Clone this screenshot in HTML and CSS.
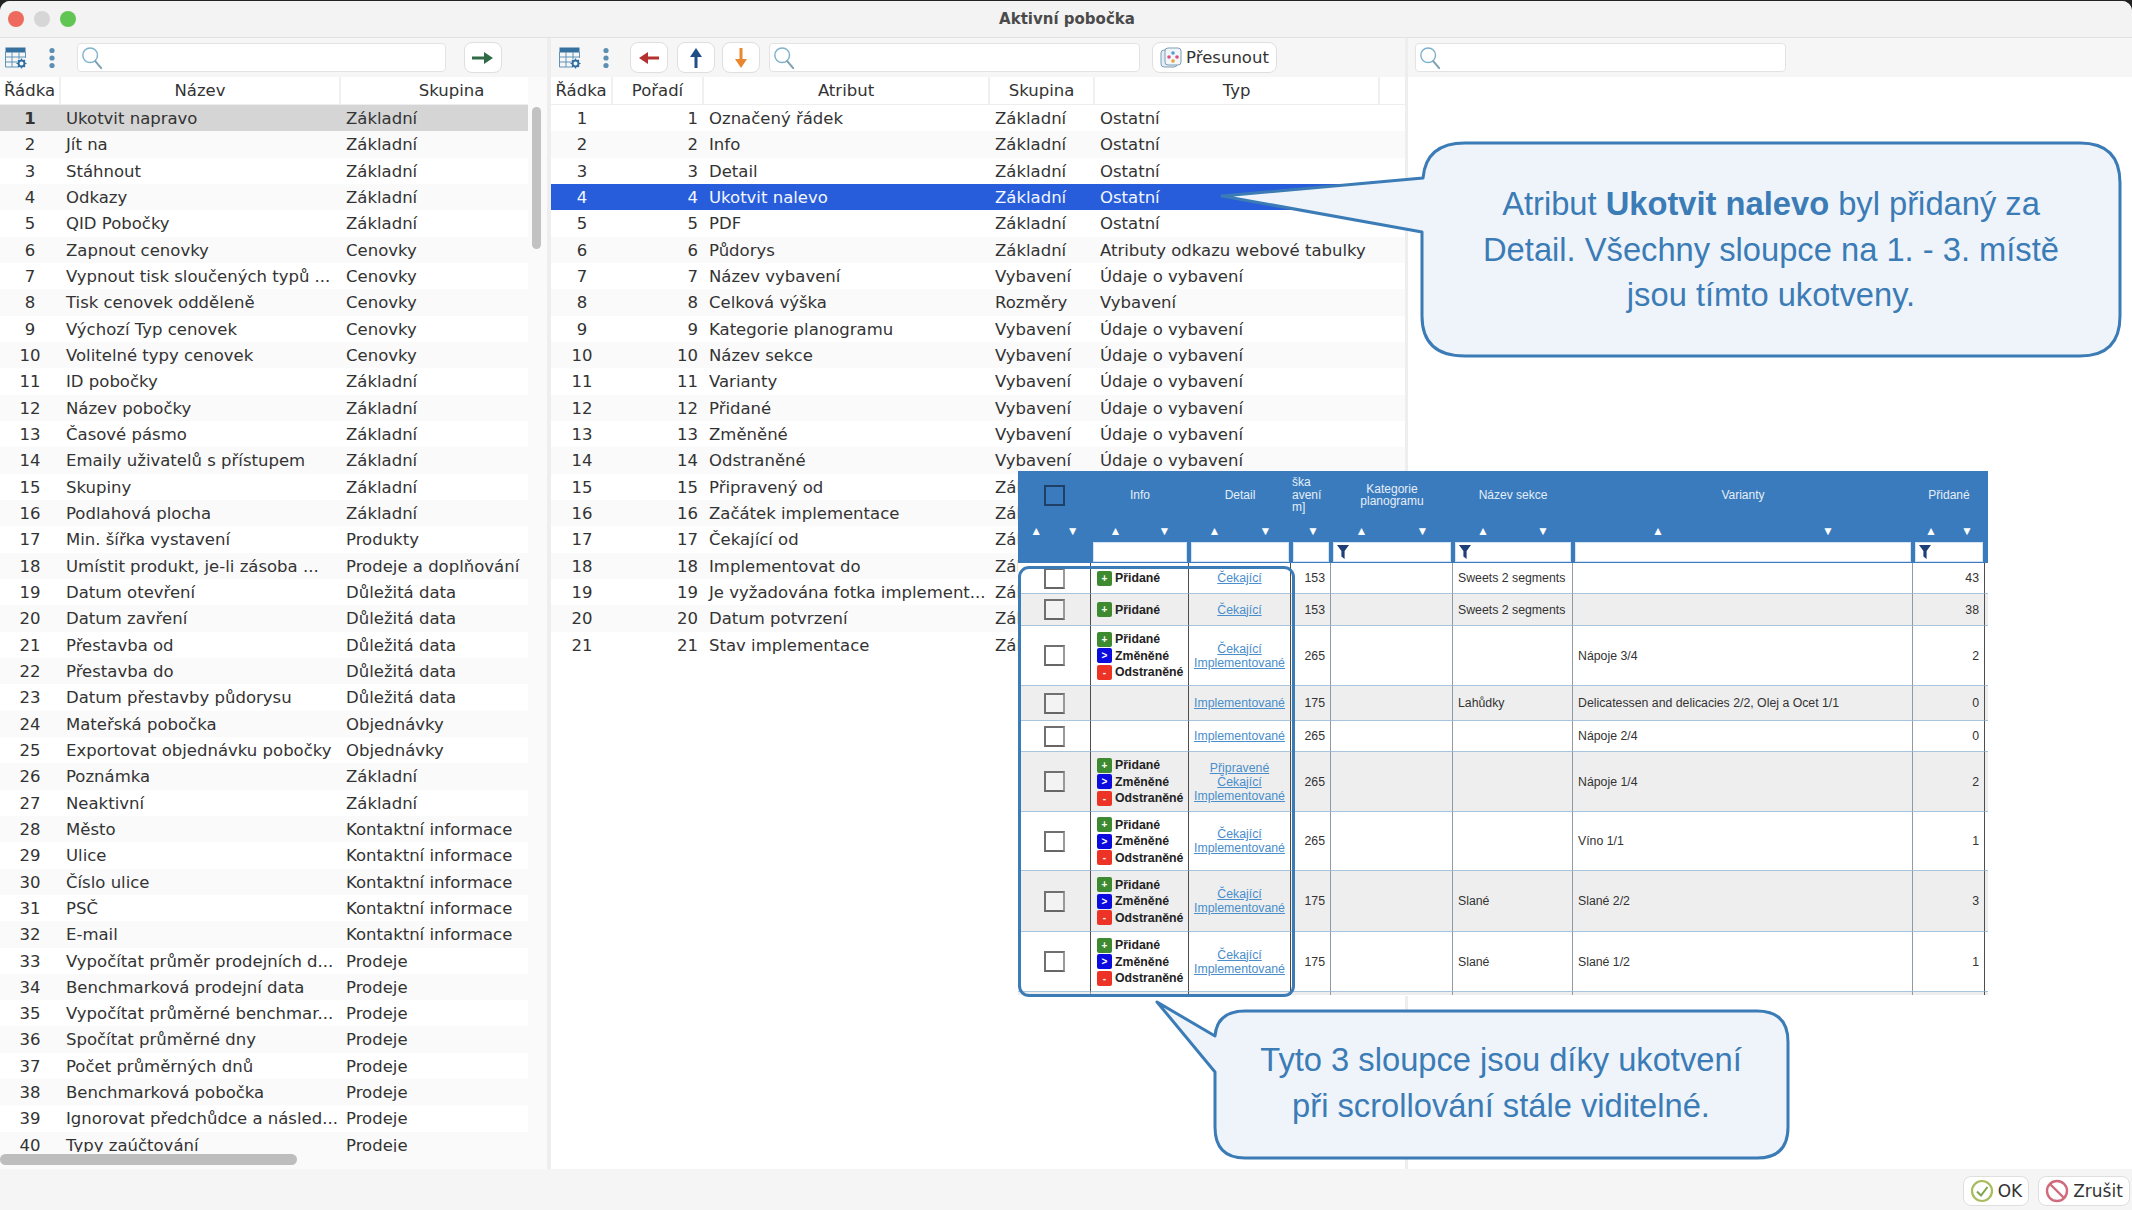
FILE: index.html
```html
<!DOCTYPE html>
<html lang="cs">
<head>
  <meta charset="UTF-8">
  <title>Aktivní pobočka</title>
  <link rel="stylesheet" href="styles.css">
</head>
<body>
  <svg class="defs" width="0" height="0">
    <symbol id="tableicon" viewBox="0 0 22 22">
      <rect x="0.5" y="0.5" width="20" height="5" fill="#35709f"/>
      <path d="M0.5 5v15h13M0.5 10h20M0.5 15h12M7 5v15M14 5v7M20.5 5v6" fill="none" stroke="#5f93ba" stroke-width="1"/>
      <circle cx="16.5" cy="16.5" r="3" fill="none" stroke="#2f6ea3" stroke-width="2"/>
      <path d="M16.5 11.5v1.5M16.5 20v1.5M11.5 16.5h1.5M20 16.5h1.5M13 13l1 1M19 19l1 1M20 13l-1 1M14 19l-1 1" stroke="#2f6ea3" stroke-width="1.2"/>
    </symbol>
    <symbol id="kebab" viewBox="0 0 8 22">
      <circle cx="4" cy="3.5" r="2.6" fill="#5d8fb3"/>
      <circle cx="4" cy="11" r="2.6" fill="#5d8fb3"/>
      <circle cx="4" cy="18.5" r="2.6" fill="#5d8fb3"/>
    </symbol>
    <symbol id="lupa" viewBox="0 0 24 26">
      <circle cx="10" cy="10" r="8" fill="#fff" stroke="#7fb2cc" stroke-width="1.6"/>
      <path d="M15.5 16.5L22 24" stroke="#7f9fb3" stroke-width="2.2" stroke-linecap="round"/>
    </symbol>
    <symbol id="funnel" viewBox="0 0 12 14">
      <path d="M0 0h12L7.6 6v8L4.4 11.5V6z" fill="#1f3f78"/>
    </symbol>
  </svg>

  <div class="window">
    <header class="titlebar">
      <div class="lights">
        <span class="light red"></span>
        <span class="light gray"></span>
        <span class="light green"></span>
      </div>
      <div class="wintitle">Aktivní pobočka</div>
    </header>

    <div class="main">
      <section class="panel panel-left">
        <div class="toolbar">
          <svg class="ico-table"><use href="#tableicon"/></svg>
          <svg class="ico-kebab kebab-l"><use href="#kebab"/></svg>
          <div class="search search-l"><svg class="ico-lupa"><use href="#lupa"/></svg></div>
          <button class="btn btn-go">
            <svg width="22" height="14" viewBox="0 0 22 14"><path d="M0 5.5h12V1l9 6-9 6V8.500H0z" fill="#2f6b45"/></svg>
          </button>
        </div>
        <div class="thead cols-left">
          <span>Řádka</span><span>Název</span><span class="th-wide">Skupina</span>
        </div>
        <div class="tbody">
          <div class="row cols-left sel-gray"><b>1</b><span>Ukotvit napravo</span><span>Základní</span></div>
          <div class="row cols-left"><b>2</b><span>Jít na</span><span>Základní</span></div>
          <div class="row cols-left"><b>3</b><span>Stáhnout</span><span>Základní</span></div>
          <div class="row cols-left"><b>4</b><span>Odkazy</span><span>Základní</span></div>
          <div class="row cols-left"><b>5</b><span>QID Pobočky</span><span>Základní</span></div>
          <div class="row cols-left"><b>6</b><span>Zapnout cenovky</span><span>Cenovky</span></div>
          <div class="row cols-left"><b>7</b><span>Vypnout tisk sloučených typů ...</span><span>Cenovky</span></div>
          <div class="row cols-left"><b>8</b><span>Tisk cenovek odděleně</span><span>Cenovky</span></div>
          <div class="row cols-left"><b>9</b><span>Výchozí Typ cenovek</span><span>Cenovky</span></div>
          <div class="row cols-left"><b>10</b><span>Volitelné typy cenovek</span><span>Cenovky</span></div>
          <div class="row cols-left"><b>11</b><span>ID pobočky</span><span>Základní</span></div>
          <div class="row cols-left"><b>12</b><span>Název pobočky</span><span>Základní</span></div>
          <div class="row cols-left"><b>13</b><span>Časové pásmo</span><span>Základní</span></div>
          <div class="row cols-left"><b>14</b><span>Emaily uživatelů s přístupem</span><span>Základní</span></div>
          <div class="row cols-left"><b>15</b><span>Skupiny</span><span>Základní</span></div>
          <div class="row cols-left"><b>16</b><span>Podlahová plocha</span><span>Základní</span></div>
          <div class="row cols-left"><b>17</b><span>Min. šířka vystavení</span><span>Produkty</span></div>
          <div class="row cols-left"><b>18</b><span>Umístit produkt, je-li zásoba ...</span><span>Prodeje a doplňování</span></div>
          <div class="row cols-left"><b>19</b><span>Datum otevření</span><span>Důležitá data</span></div>
          <div class="row cols-left"><b>20</b><span>Datum zavření</span><span>Důležitá data</span></div>
          <div class="row cols-left"><b>21</b><span>Přestavba od</span><span>Důležitá data</span></div>
          <div class="row cols-left"><b>22</b><span>Přestavba do</span><span>Důležitá data</span></div>
          <div class="row cols-left"><b>23</b><span>Datum přestavby půdorysu</span><span>Důležitá data</span></div>
          <div class="row cols-left"><b>24</b><span>Mateřská pobočka</span><span>Objednávky</span></div>
          <div class="row cols-left"><b>25</b><span>Exportovat objednávku pobočky</span><span>Objednávky</span></div>
          <div class="row cols-left"><b>26</b><span>Poznámka</span><span>Základní</span></div>
          <div class="row cols-left"><b>27</b><span>Neaktivní</span><span>Základní</span></div>
          <div class="row cols-left"><b>28</b><span>Město</span><span>Kontaktní informace</span></div>
          <div class="row cols-left"><b>29</b><span>Ulice</span><span>Kontaktní informace</span></div>
          <div class="row cols-left"><b>30</b><span>Číslo ulice</span><span>Kontaktní informace</span></div>
          <div class="row cols-left"><b>31</b><span>PSČ</span><span>Kontaktní informace</span></div>
          <div class="row cols-left"><b>32</b><span>E-mail</span><span>Kontaktní informace</span></div>
          <div class="row cols-left"><b>33</b><span>Vypočítat průměr prodejních d...</span><span>Prodeje</span></div>
          <div class="row cols-left"><b>34</b><span>Benchmarková prodejní data</span><span>Prodeje</span></div>
          <div class="row cols-left"><b>35</b><span>Vypočítat průměrné benchmar...</span><span>Prodeje</span></div>
          <div class="row cols-left"><b>36</b><span>Spočítat průměrné dny</span><span>Prodeje</span></div>
          <div class="row cols-left"><b>37</b><span>Počet průměrných dnů</span><span>Prodeje</span></div>
          <div class="row cols-left"><b>38</b><span>Benchmarková pobočka</span><span>Prodeje</span></div>
          <div class="row cols-left"><b>39</b><span>Ignorovat předchůdce a násled...</span><span>Prodeje</span></div>
          <div class="row cols-left"><b>40</b><span>Typy zaúčtování</span><span>Prodeje</span></div>
        </div>
        <div class="thumb-v"></div>
        <div class="thumb-h"></div>
      </section>

      <section class="panel panel-mid">
        <div class="toolbar">
          <svg class="ico-table table-m"><use href="#tableicon"/></svg>
          <svg class="ico-kebab kebab-m"><use href="#kebab"/></svg>
          <button class="btn btn-left">
            <svg width="20" height="14" viewBox="0 0 20 14"><path d="M20 5.500H9V1L0 7l9 6V8.500h11z" fill="#b5312f"/></svg>
          </button>
          <button class="btn btn-up">
            <svg width="14" height="20" viewBox="0 0 14 20"><path d="M5.500 20V9H1l6-9 6 9H8.500v11z" fill="#1f4f86"/></svg>
          </button>
          <button class="btn btn-down">
            <svg width="14" height="20" viewBox="0 0 14 20"><path d="M5.500 0v11H1l6 9 6-9H8.500V0z" fill="#e8882e"/></svg>
          </button>
          <div class="search search-m"><svg class="ico-lupa"><use href="#lupa"/></svg></div>
          <button class="btn btn-move">
            <svg width="22" height="22" viewBox="0 0 22 22">
              <rect x="1" y="3" width="16" height="17" rx="3" fill="#e4edf4" stroke="#7d9db6"/>
              <rect x="5" y="1" width="16" height="17" rx="3" fill="#f3f6f9" stroke="#7d9db6"/>
              <circle cx="9" cy="10" r="1.800" fill="#d9527f"/>
              <circle cx="17" cy="10" r="1.800" fill="#d9527f"/>
              <circle cx="13" cy="6" r="1.800" fill="#4f9fd0"/>
              <circle cx="13" cy="14" r="1.800" fill="#e8a23a"/>
            </svg>
            Přesunout
          </button>
        </div>
        <div class="thead cols-mid">
          <span>Řádka</span><span>Pořadí</span><span>Atribut</span><span>Skupina</span><span>Typ</span><span></span>
        </div>
        <div class="tbody">
          <div class="row cols-mid"><i>1</i><em>1</em><span>Označený řádek</span><span>Základní</span><span>Ostatní</span></div>
          <div class="row cols-mid"><i>2</i><em>2</em><span>Info</span><span>Základní</span><span>Ostatní</span></div>
          <div class="row cols-mid"><i>3</i><em>3</em><span>Detail</span><span>Základní</span><span>Ostatní</span></div>
          <div class="row cols-mid sel-blue"><i>4</i><em>4</em><span>Ukotvit nalevo</span><span>Základní</span><span>Ostatní</span></div>
          <div class="row cols-mid"><i>5</i><em>5</em><span>PDF</span><span>Základní</span><span>Ostatní</span></div>
          <div class="row cols-mid"><i>6</i><em>6</em><span>Půdorys</span><span>Základní</span><span>Atributy odkazu webové tabulky</span></div>
          <div class="row cols-mid"><i>7</i><em>7</em><span>Název vybavení</span><span>Vybavení</span><span>Údaje o vybavení</span></div>
          <div class="row cols-mid"><i>8</i><em>8</em><span>Celková výška</span><span>Rozměry</span><span>Vybavení</span></div>
          <div class="row cols-mid"><i>9</i><em>9</em><span>Kategorie planogramu</span><span>Vybavení</span><span>Údaje o vybavení</span></div>
          <div class="row cols-mid"><i>10</i><em>10</em><span>Název sekce</span><span>Vybavení</span><span>Údaje o vybavení</span></div>
          <div class="row cols-mid"><i>11</i><em>11</em><span>Varianty</span><span>Vybavení</span><span>Údaje o vybavení</span></div>
          <div class="row cols-mid"><i>12</i><em>12</em><span>Přidané</span><span>Vybavení</span><span>Údaje o vybavení</span></div>
          <div class="row cols-mid"><i>13</i><em>13</em><span>Změněné</span><span>Vybavení</span><span>Údaje o vybavení</span></div>
          <div class="row cols-mid"><i>14</i><em>14</em><span>Odstraněné</span><span>Vybavení</span><span>Údaje o vybavení</span></div>
          <div class="row cols-mid"><i>15</i><em>15</em><span>Připravený od</span><span>Základní</span><span></span></div>
          <div class="row cols-mid"><i>16</i><em>16</em><span>Začátek implementace</span><span>Základní</span><span></span></div>
          <div class="row cols-mid"><i>17</i><em>17</em><span>Čekající od</span><span>Základní</span><span></span></div>
          <div class="row cols-mid"><i>18</i><em>18</em><span>Implementovat do</span><span>Základní</span><span></span></div>
          <div class="row cols-mid"><i>19</i><em>19</em><span>Je vyžadována fotka implement...</span><span>Základní</span><span></span></div>
          <div class="row cols-mid"><i>20</i><em>20</em><span>Datum potvrzení</span><span>Základní</span><span></span></div>
          <div class="row cols-mid"><i>21</i><em>21</em><span>Stav implementace</span><span>Základní</span><span></span></div>
        </div>
      </section>

      <section class="panel panel-right">
        <div class="toolbar">
          <div class="search search-r"><svg class="ico-lupa"><use href="#lupa"/></svg></div>
        </div>
      </section>
    </div>

    <footer class="bottombar">
      <button class="btn btn-foot btn-ok">
        <svg width="24" height="24" viewBox="0 0 24 24">
          <circle cx="12" cy="12" r="10" fill="#fff" stroke="#a8bb5e" stroke-width="2.200"/>
          <path d="M7 12.500l4 4 6.500-8.500" fill="none" stroke="#7fa24a" stroke-width="2"/>
        </svg>
        OK
      </button>
      <button class="btn btn-foot btn-cancel">
        <svg width="24" height="24" viewBox="0 0 24 24">
          <circle cx="12" cy="12" r="10" fill="#fff" stroke="#cf6b7c" stroke-width="2.400"/>
          <path d="M5 5l14 14" stroke="#cf6b7c" stroke-width="2.400"/>
        </svg>
        Zrušit
      </button>
    </footer>
  </div>

  <!-- vlozeny obrazek tabulky pres okno -->
  <div class="shot">
    <div class="grid">
      <div class="hd hd-check"><div class="hd-title"><span class="cb cb-head"></span></div><div class="sorts"><u>▲</u><u>▼</u></div><div class="filter filter-none"></div></div>
      <div class="hd"><div class="hd-title">Info</div><div class="sorts"><u>▲</u><u>▼</u></div><div class="filter"></div></div>
      <div class="hd"><div class="hd-title">Detail</div><div class="sorts"><u>▲</u><u>▼</u></div><div class="filter"></div></div>
      <div class="hd hd-cut"><div class="hd-title">ška<br>avení<br>m]</div><div class="sorts sorts-end"><u>▼</u></div><div class="filter"></div></div>
      <div class="hd"><div class="hd-title">Kategorie<br>planogramu</div><div class="sorts"><u>▲</u><u>▼</u></div><div class="filter"><svg class="ico-funnel"><use href="#funnel"/></svg></div></div>
      <div class="hd"><div class="hd-title">Název sekce</div><div class="sorts"><u>▲</u><u>▼</u></div><div class="filter"><svg class="ico-funnel"><use href="#funnel"/></svg></div></div>
      <div class="hd"><div class="hd-title">Varianty</div><div class="sorts"><u>▲</u><u>▼</u></div><div class="filter"></div></div>
      <div class="hd"><div class="hd-title">Přidané</div><div class="sorts"><u>▲</u><u>▼</u></div><div class="filter"><svg class="ico-funnel"><use href="#funnel"/></svg></div></div>
      <div class="hd"></div>

      <div class="tr">
        <div class="td ctr"><span class="cb"></span></div>
        <div class="td dark info"><p><span class="bd bd-g">+</span>Přidané</p></div>
        <div class="td dark links"><a>Čekající</a></div>
        <div class="td num">153</div><div class="td"></div><div class="td">Sweets 2 segments</div><div class="td"></div><div class="td dark num">43</div><div class="td end"></div>
      </div>
      <div class="tr alt">
        <div class="td ctr"><span class="cb"></span></div>
        <div class="td dark info"><p><span class="bd bd-g">+</span>Přidané</p></div>
        <div class="td dark links"><a>Čekající</a></div>
        <div class="td num">153</div><div class="td"></div><div class="td">Sweets 2 segments</div><div class="td"></div><div class="td dark num">38</div><div class="td end"></div>
      </div>
      <div class="tr">
        <div class="td ctr"><span class="cb"></span></div>
        <div class="td dark info"><p><span class="bd bd-g">+</span>Přidané</p><p><span class="bd bd-b">&gt;</span>Změněné</p><p><span class="bd bd-r">-</span>Odstraněné</p></div>
        <div class="td dark links"><a>Čekající</a><a>Implementované</a></div>
        <div class="td num">265</div><div class="td"></div><div class="td"></div><div class="td">Nápoje 3/4</div><div class="td dark num">2</div><div class="td end"></div>
      </div>
      <div class="tr alt">
        <div class="td ctr"><span class="cb"></span></div>
        <div class="td dark info"></div>
        <div class="td dark links"><a>Implementované</a></div>
        <div class="td num">175</div><div class="td"></div><div class="td">Lahůdky</div><div class="td">Delicatessen and delicacies 2/2, Olej a Ocet 1/1</div><div class="td dark num">0</div><div class="td end"></div>
      </div>
      <div class="tr">
        <div class="td ctr"><span class="cb"></span></div>
        <div class="td dark info"></div>
        <div class="td dark links"><a>Implementované</a></div>
        <div class="td num">265</div><div class="td"></div><div class="td"></div><div class="td">Nápoje 2/4</div><div class="td dark num">0</div><div class="td end"></div>
      </div>
      <div class="tr alt">
        <div class="td ctr"><span class="cb"></span></div>
        <div class="td dark info"><p><span class="bd bd-g">+</span>Přidané</p><p><span class="bd bd-b">&gt;</span>Změněné</p><p><span class="bd bd-r">-</span>Odstraněné</p></div>
        <div class="td dark links"><a>Připravené</a><a>Čekající</a><a>Implementované</a></div>
        <div class="td num">265</div><div class="td"></div><div class="td"></div><div class="td">Nápoje 1/4</div><div class="td dark num">2</div><div class="td end"></div>
      </div>
      <div class="tr">
        <div class="td ctr"><span class="cb"></span></div>
        <div class="td dark info"><p><span class="bd bd-g">+</span>Přidané</p><p><span class="bd bd-b">&gt;</span>Změněné</p><p><span class="bd bd-r">-</span>Odstraněné</p></div>
        <div class="td dark links"><a>Čekající</a><a>Implementované</a></div>
        <div class="td num">265</div><div class="td"></div><div class="td"></div><div class="td">Víno 1/1</div><div class="td dark num">1</div><div class="td end"></div>
      </div>
      <div class="tr alt">
        <div class="td ctr"><span class="cb"></span></div>
        <div class="td dark info"><p><span class="bd bd-g">+</span>Přidané</p><p><span class="bd bd-b">&gt;</span>Změněné</p><p><span class="bd bd-r">-</span>Odstraněné</p></div>
        <div class="td dark links"><a>Čekající</a><a>Implementované</a></div>
        <div class="td num">175</div><div class="td"></div><div class="td">Slané</div><div class="td">Slané 2/2</div><div class="td dark num">3</div><div class="td end"></div>
      </div>
      <div class="tr">
        <div class="td ctr"><span class="cb"></span></div>
        <div class="td dark info"><p><span class="bd bd-g">+</span>Přidané</p><p><span class="bd bd-b">&gt;</span>Změněné</p><p><span class="bd bd-r">-</span>Odstraněné</p></div>
        <div class="td dark links"><a>Čekající</a><a>Implementované</a></div>
        <div class="td num">175</div><div class="td"></div><div class="td">Slané</div><div class="td">Slané 1/2</div><div class="td dark num">1</div><div class="td end"></div>
      </div>
      <div class="tr alt stub">
        <div class="td"></div><div class="td dark"></div><div class="td dark"></div><div class="td"></div><div class="td"></div><div class="td"></div><div class="td"></div><div class="td dark"></div><div class="td end"></div>
      </div>
    </div>
    <div class="frozen"></div>
  </div>

  <svg class="bubbles" width="2132" height="1210" viewBox="0 0 2132 1210">
    <path d="M1222 196L1423 178Q1426 143 1465 143H2080Q2120 143 2120 183V316Q2120 356 2080 356H1465Q1422 356 1422 316V232Z"/>
    <path d="M1157 1002L1215 1036Q1217 1011 1245 1011H1757Q1788 1011 1788 1042V1127Q1788 1158 1757 1158H1245Q1215 1158 1215 1127V1072Z"/>
  </svg>
  <div class="note note-top">Atribut <strong>Ukotvit nalevo</strong> byl přidaný za<br>Detail. Všechny sloupce na 1. - 3. místě<br>jsou tímto ukotveny.</div>
  <div class="note note-bottom">Tyto 3 sloupce jsou díky ukotvení<br>při scrollování stále viditelné.</div>
</body>
</html>
```

FILE: styles.css
```css
* { box-sizing: border-box; }
html, body { margin: 0; padding: 0; height: 100%; overflow: hidden; }
body { background: #222; font-family: "DejaVu Sans", sans-serif; color: #333; position: relative; }
.defs { position: absolute; }

.window { height: 1210px; display: flex; flex-direction: column; margin-top: 1px; background: #f5f5f5; border-radius: 10px 10px 0 0; overflow: hidden; }

.titlebar { height: 37px; flex: none; display: flex; align-items: center; position: relative; background: #f3f3f3; border-bottom: 1px solid #e2e2e2; }
.lights { display: flex; gap: 10px; padding-left: 8px; }
.light { width: 16px; height: 16px; border-radius: 50%; }
.light.red { background: #ee6a5f; }
.light.gray { background: #d6d6d6; }
.light.green { background: #61c554; }
.wintitle { position: absolute; left: 0; right: 0; text-align: center; font-size: 15px; font-weight: bold; color: #4a4a4a; padding-left: 2px; }

.main { flex: 1; display: flex; min-height: 0; background: #fff; }
.panel { display: flex; flex-direction: column; position: relative; }
.panel-left { width: 551px; flex: none; background: #fafafa; border-right: 4px solid #eeeeee; }
.panel-mid { width: 857px; flex: none; background: #fff; border-right: 3px solid #eeeeee; }
.panel-right { flex: 1; }

.toolbar { height: 39px; flex: none; display: flex; align-items: center; background: #f6f6f6; }

.ico-table { width: 22px; height: 22px; margin-left: 5px; flex: none; }
.table-m { margin-left: 8px; }
.ico-kebab { width: 8px; height: 22px; flex: none; }
.kebab-l { margin-left: 21px; }
.kebab-m { margin-left: 21px; }
.ico-lupa { width: 22px; height: 24px; margin: 2px 0 0 3px; display: block; }
.ico-funnel { width: 12px; height: 14px; display: block; margin: 2px 0 0 3px; }

.search { height: 29px; background: #fff; border: 1px solid #e3e3e3; border-radius: 4px; flex: none; }
.search-l { width: 369px; margin-left: 21px; }
.search-m { width: 371px; margin-left: 9px; }
.search-r { width: 371px; margin-left: 7px; }

.btn { height: 31px; background: #fff; border: 1px solid #dfdfdf; border-radius: 8px; padding: 0; display: inline-flex; align-items: center; justify-content: center; flex: none; font-family: inherit; color: #333; }
.btn-go { width: 38px; margin-left: 18px; }
.btn-left { width: 38px; margin-left: 20px; }
.btn-up { width: 38px; margin-left: 9px; }
.btn-down { width: 38px; margin-left: 7px; }
.btn-move { width: 125px; margin-left: 12px; gap: 4px; font-size: 16.5px; }

.thead { height: 28px; flex: none; background: #fff; font-size: 16.5px; border-bottom: 1px solid #eeeeee; }
.thead span { text-align: center; line-height: 28px; border-right: 2px solid #f0f0f0; white-space: nowrap; overflow: hidden; }
.thead span:last-child { border-right: 0; }
.thead .th-wide { padding-left: 34px; }

.cols-left { display: grid; grid-template-columns: 61px 280px 187px; width: 528px; }
.cols-mid { display: grid; grid-template-columns: 62px 91px 286px 105px 285px 25px; width: 854px; }

.tbody { height: 1047px; overflow: hidden; flex: none; }
.row { height: 26.33px; padding-top: 2px; line-height: 24.33px; font-size: 16.5px; white-space: nowrap; background: #fff; }
.row:nth-child(even) { background: #fafafa; }
.cols-left.row span { padding-left: 5px; }
.cols-mid.row span { padding-left: 5px; }
.row b { text-align: center; font-weight: normal; padding-right: 1px; }
.row i { text-align: center; font-style: normal; }
.row em { text-align: right; font-style: normal; padding-right: 6px; }
.row.sel-gray { background: #d5d5d5; }
.row.sel-blue { background: #275ddb; color: #f4f7ff; }
.row.sel-gray b { font-weight: bold; }

.thumb-v { position: absolute; left: 532px; top: 69px; width: 9px; height: 142px; background: #c2c2c2; border-radius: 5px; }
.thumb-h { position: absolute; left: 0; top: 1116px; width: 297px; height: 11px; background: #bdbdbd; border-radius: 6px; }

.bottombar { height: 42px; flex: none; display: flex; justify-content: flex-end; align-items: center; gap: 9px; padding: 2px 2px 0 0; background: #f5f5f5; }
.btn-foot { height: 30px; gap: 4px; font-size: 17px; }
.btn-ok { width: 66px; }
.btn-cancel { width: 92px; }

/* obrazek s tabulkou */
.shot { position: absolute; left: 1018px; top: 471px; width: 970px; height: 525px; background: #fff; font-family: "Liberation Sans", Arial, sans-serif; font-size: 12.3px; color: #333; }
.grid { display: grid; grid-template-columns: 73px 98px 102px 40px 122px 120px 340px 72px 3px; grid-template-rows: 92px 31px 32px 60px 35px 31px 60px 59px 61px 60px 3px; }
.tr { display: contents; }

.hd { background: #3a7bbd; color: #e4eef8; display: flex; flex-direction: column; font-size: 12px; text-align: center; overflow: hidden; }
.hd-title { height: 48px; display: flex; align-items: center; justify-content: center; line-height: 12.5px; }
.hd-cut .hd-title { justify-content: flex-start; text-align: left; padding-left: 1px; }
.sorts { height: 23px; display: flex; justify-content: space-around; align-items: center; color: #fff; font-size: 12px; }
.sorts u { text-decoration: none; }
.sorts-end { justify-content: flex-end; padding-right: 12px; }
.filter { height: 20px; margin: 0 2px; background: #fff; border: 1px solid #d5e4f2; }
.filter-none { background: transparent; border: 0; }

.td { border-bottom: 1px solid #a9c5de; border-right: 1px solid #8f9aa5; display: flex; align-items: center; padding: 0 5px; white-space: nowrap; overflow: hidden; background: #fff; }
.alt .td { background: #eeeeee; }
.td.dark { border-right-color: #4d4d4d; }
.td.ctr { justify-content: center; border-right-color: #4d4d4d; }
.td.num { justify-content: flex-end; }
.td.end { border-right: 0; padding: 0; }
.stub .td { border-bottom: 0; }

.info { flex-direction: column; align-items: flex-start; justify-content: center; padding-left: 6px; font-weight: bold; color: #222; }
.info p { margin: 0; height: 16.5px; display: flex; align-items: center; }
.bd { width: 15px; height: 15px; border-radius: 2px; margin-right: 3px; color: #fff; font-size: 10px; line-height: 15px; text-align: center; }
.bd-g { background: #3d8a30; }
.bd-b { background: #0b0be0; }
.bd-r { background: #ec3326; }
.links { flex-direction: column; justify-content: center; padding: 0; line-height: 14px; }
.links a { color: #4a8ecb; text-decoration: underline; }

.cb { display: block; width: 21px; height: 21px; background: #fff; border: 2px solid #707070; border-right-color: #999; border-bottom-color: #666; }
.alt .cb { background: #f3f3f3; }
.cb-head { background: #3a7bbd; border-color: #1e3f66; }

.frozen { position: absolute; left: 0; top: 95px; width: 277px; height: 431px; border: 3px solid #3b7bb6; border-radius: 11px; }

.bubbles { position: absolute; left: 0; top: 0; }
.bubbles path { fill: #eef4fa; stroke: #3b7bb6; stroke-width: 3; stroke-linejoin: round; }

.note { position: absolute; text-align: center; color: #3b7bb6; font-family: "Liberation Sans", Arial, sans-serif; font-size: 32.7px; line-height: 45.5px; white-space: nowrap; }
.note-top { left: 1421px; top: 181px; width: 700px; }
.note-bottom { left: 1214px; top: 1037px; width: 574px; line-height: 46px; }
```
